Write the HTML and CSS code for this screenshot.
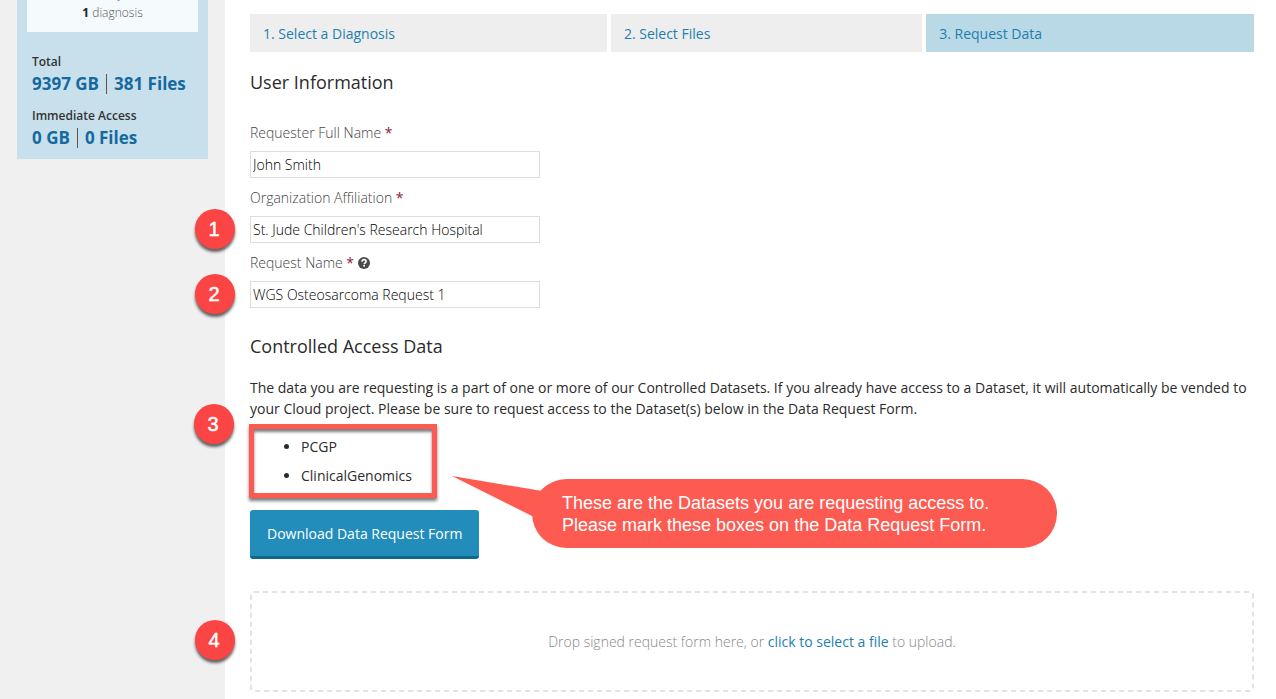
FILE: index.html
```html
<!DOCTYPE html>
<html lang="en">
<head>
<meta charset="utf-8">
<title>Request Data</title>
<link rel="stylesheet" href="styles.css">
</head>
<body>
<div class="page">
  <aside class="sidebar">
    <div class="summary">
      <div class="selection">
        <p><b>1</b> subject</p>
        <p><b>1</b> diagnosis</p>
      </div>
      <div class="stats">
        <div class="stat">
          <h3>Total</h3>
          <p class="figures"><span>9397 GB</span><span>381 Files</span></p>
        </div>
        <div class="stat">
          <h3>Immediate Access</h3>
          <p class="figures"><span>0 GB</span><span>0 Files</span></p>
        </div>
      </div>
    </div>
  </aside>
  <main class="content">
    <nav class="steps">
      <a href="#diagnosis">1. Select a Diagnosis</a>
      <a href="#files">2. Select Files</a>
      <a href="#request" class="current">3. Request Data</a>
    </nav>

    <h2>User Information</h2>
    <form class="fields">
      <div class="field">
        <label for="name">Requester Full Name <span class="required">*</span></label>
        <input id="name" type="text" value="John Smith">
      </div>
      <div class="field">
        <span class="marker">1</span>
        <label for="org">Organization Affiliation <span class="required">*</span></label>
        <input id="org" type="text" value="St. Jude Children's Research Hospital">
      </div>
      <div class="field">
        <span class="marker">2</span>
        <label for="request">Request Name <span class="required">*</span>
          <svg class="help" viewBox="0 0 12 12" aria-hidden="true">
            <circle cx="6" cy="6" r="6" fill="#4a4a4a"/>
            <path d="M4 4.7C4 3.2 4.9 2.6 6.1 2.6S8.1 3.4 8.1 4.5C8.1 5.9 6.2 5.9 6.2 7.3" fill="none" stroke="#fff" stroke-width="1.6"/>
            <rect x="5.3" y="8" width="1.7" height="1.6" fill="#fff"/>
          </svg>
        </label>
        <input id="request" type="text" value="WGS Osteosarcoma Request 1">
      </div>
    </form>

    <h2>Controlled Access Data</h2>
    <p class="intro">The data you are requesting is a part of one or more of our Controlled Datasets. If you already have access to a Dataset, it will automatically be vended to your Cloud project. Please be sure to request access to the Dataset(s) below in the Data Request Form.</p>

    <div class="datasets">
      <span class="marker marker-top">3</span>
      <ul>
        <li>PCGP</li>
        <li>ClinicalGenomics</li>
      </ul>
      <div class="callout">
        <svg class="tail" viewBox="0 0 100 46" aria-hidden="true"><path d="M0 0L90 15L96 46L80 40Z" fill="#fd5b52"/></svg>
        These are the Datasets you are requesting access to.<br>
        Please mark these boxes on the Data Request Form.
      </div>
    </div>

    <button class="download" type="button">Download Data Request Form</button>

    <div class="dropzone">
      <span class="marker marker-middle">4</span>
      <svg class="dashes" aria-hidden="true"><rect x="1" y="1" rx="3"/></svg>
      <p>Drop signed request form here, or <a href="#upload">click to select a file</a> to upload.</p>
    </div>
  </main>
</div>
</body>
</html>
```
FILE: styles.css
```css
* { box-sizing: border-box; }

body {
  margin: 0;
  color: #2b2b2b;
  background: #fff;
  font: 14px/21px "Open Sans", sans-serif;
}

h2, h3, p, ul { margin: 0; }
a { color: #1c7fb0; text-decoration: none; }

.page {
  display: flex;
  min-height: 100vh;
  overflow: hidden;
}

/* Sidebar */
.sidebar {
  flex: 0 0 225px;
  padding: 0 17px;
  background: #f0f0f0;
}
.summary {
  margin-top: -30px;
  padding: 10px 10px 9px;
  background: #c8e0ec;
}
.selection {
  padding: 4px 0 10px;
  background: #f5fafd;
  color: #555;
  font-size: 12px;
  font-weight: 300;
  line-height: 19px;
  text-align: center;
}
.selection b { color: #222; font-weight: 700; }
.stats {
  display: grid;
  gap: 10px;
  padding: 20px 5px 0;
}
.stat h3 {
  color: #333;
  font-size: 12px;
  font-weight: 600;
  line-height: 20px;
}
.figures {
  display: flex;
  color: #14699f;
  font-size: 17px;
  font-weight: 700;
  line-height: 24px;
  white-space: nowrap;
}
.figures span + span {
  margin-left: 7px;
  padding-left: 8px;
  background: linear-gradient(#555, #555) 0 2px / 1px 20px no-repeat;
}

/* Main column */
.content {
  flex: 1;
  min-width: 0;
  padding: 14px 22px 7px 25px;
}
.steps { display: flex; gap: 4px; }
.steps a {
  flex: 1 1 auto;
  padding: 9px 13px 8px;
  background: #eee;
}
.steps .current { background: #b9d9e6; }

h2 {
  margin-top: 18px;
  font-size: 18px;
  font-weight: 400;
  line-height: 24px;
}

.fields {
  display: grid;
  gap: 9px;
  margin-top: 28px;
}
.field { position: relative; }
.field label {
  display: block;
  margin-bottom: 8px;
  color: #444;
  font-weight: 300;
}
.required { color: #97143a; font-weight: 400; }
.help {
  width: 12px;
  height: 12px;
  vertical-align: -1px;
}
.field input {
  display: block;
  width: 290px;
  height: 27px;
  padding: 0 2px;
  border: 1px solid #ddd;
  color: #000;
  background: #fff;
  font: inherit;
  font-weight: 300;
}
.fields + h2 { margin-top: 26px; }
.intro { margin-top: 19px; }

/* Numbered markers in the gutter */
.marker {
  position: absolute;
  left: -55px;
  bottom: -6px;
  width: 40px;
  height: 40px;
  padding-right: 2px;
  border-radius: 50%;
  background: #fb4444;
  box-shadow: 0 3px 3px rgba(0, 0, 0, .6);
  color: #fff;
  font: 20px/40px "Liberation Sans", Arial, sans-serif;
  -webkit-text-stroke: 0.5px #fff;
  text-align: center;
}
.marker-top { top: -20px; bottom: auto; }
.marker-middle { top: 29px; bottom: auto; }

/* Highlighted dataset list with its callout */
.datasets {
  position: relative;
  width: 188px;
  margin: 5px 0 0 -1px;
}
.datasets ul {
  padding: 7px 0 7px 47px;
  border: 5px solid #fd5b52;
  box-shadow: 0 3px 3px rgba(0, 0, 0, .5), inset 0 3px 3px rgba(0, 0, 0, .5);
}
.datasets li + li { margin-top: 8px; }
.callout {
  position: absolute;
  top: 55px;
  left: 283px;
  padding: 13px 68px 12px 30px;
  border-radius: 35px;
  background: #fd5b52;
  color: #fff;
  font: 18px/22px "Liberation Sans", Arial, sans-serif;
  white-space: nowrap;
}
.tail {
  position: absolute;
  top: -3px;
  left: -80px;
  width: 100px;
  height: 46px;
}

.download {
  display: block;
  margin-top: 12px;
  padding: 13px 17px 12px;
  border: 0;
  border-bottom: 3px solid #11688f;
  border-radius: 3px;
  background: #228dbb;
  color: #fff;
  font: inherit;
  line-height: 21px;
}

.dropzone {
  position: relative;
  margin-top: 32px;
  padding: 40px 20px;
  color: #888;
  font-weight: 300;
  text-align: center;
}
.dashes {
  position: absolute;
  inset: 0;
  width: 100%;
  height: 100%;
}
.dashes rect {
  width: calc(100% - 2px);
  height: calc(100% - 2px);
  fill: none;
  stroke: #e2e2e2;
  stroke-width: 2px;
  stroke-dasharray: 5px 4px;
}
.dropzone p { position: relative; }
.dropzone a { font-weight: 500; }
```
